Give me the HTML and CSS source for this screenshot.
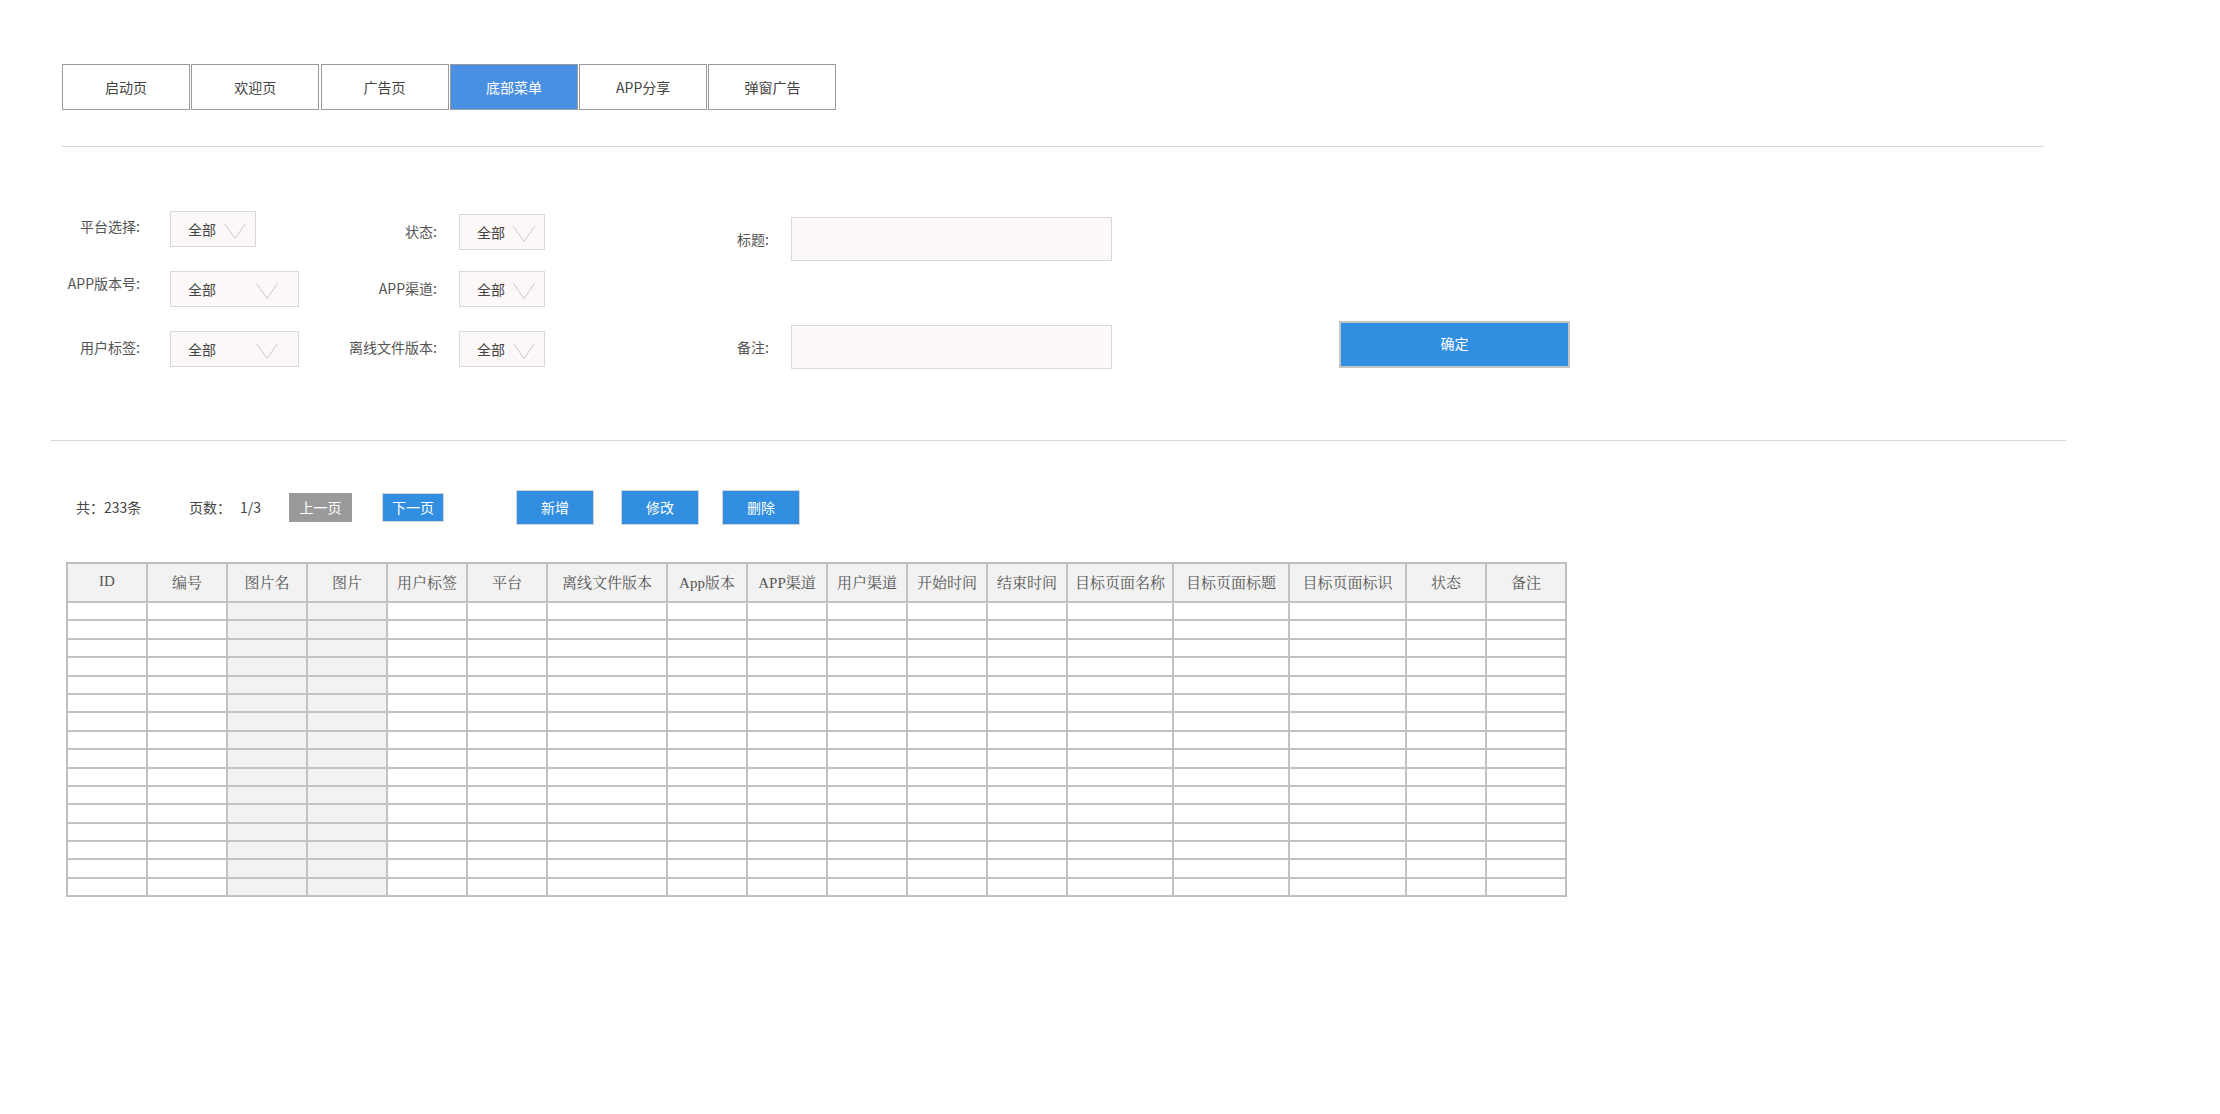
FILE: index.html
```html
<!DOCTYPE html>
<html lang="zh-CN">
<head>
<meta charset="utf-8">
<title>底部菜单</title>
<link rel="stylesheet" href="styles.css">
</head>
<body>
<div class="page">
  <div class="tabs">
    <div class="tab">启动页</div>
    <div class="tab">欢迎页</div>
    <div class="tab">广告页</div>
    <div class="tab active">底部菜单</div>
    <div class="tab">APP分享</div>
    <div class="tab">弹窗广告</div>
  </div>
  <div class="rule rule-top"></div>

  <div class="filters">
    <div class="lbl c1 r1 lbl-r1">平台选择:</div>
    <div class="select narrow c2 r1"><span>全部</span><svg class="chev" viewBox="0 0 22 16"><polyline points="0.5,0.5 11,15.5 21.5,0.5"/></svg></div>
    <div class="lbl c3 r1 lbl-state">状态:</div>
    <div class="select narrow c4 r1 sel-state"><span>全部</span><svg class="chev" viewBox="0 0 22 16"><polyline points="0.5,0.5 11,15.5 21.5,0.5"/></svg></div>
    <div class="lbl c5 r1 title-row">标题:</div>
    <div class="input c6 r1 title-row"></div>

    <div class="lbl c1 r2 lbl-up">APP版本号:</div>
    <div class="select wide c2 r2"><span>全部</span><svg class="chev" viewBox="0 0 22 16"><polyline points="0.5,0.5 11,15.5 21.5,0.5"/></svg></div>
    <div class="lbl c3 r2 lbl-mid">APP渠道:</div>
    <div class="select narrow c4 r2"><span>全部</span><svg class="chev" viewBox="0 0 22 16"><polyline points="0.5,0.5 11,15.5 21.5,0.5"/></svg></div>

    <div class="lbl c1 r3 lbl-r3">用户标签:</div>
    <div class="select wide c2 r3"><span>全部</span><svg class="chev" viewBox="0 0 22 16"><polyline points="0.5,0.5 11,15.5 21.5,0.5"/></svg></div>
    <div class="lbl c3 r3 lbl-r3">离线文件版本:</div>
    <div class="select narrow c4 r3"><span>全部</span><svg class="chev" viewBox="0 0 22 16"><polyline points="0.5,0.5 11,15.5 21.5,0.5"/></svg></div>
    <div class="lbl c5 r3 note-row">备注:</div>
    <div class="input c6 r3 note-row"></div>
    <div class="confirm c8 r3">确定</div>
  </div>

  <div class="rule rule-mid"></div>

  <div class="toolbar">
    <span class="t-total">共：233条</span>
    <span class="t-pages">页数：</span>
    <span class="t-num">1/3</span>
    <div class="btn btn-gray btn-prev">上一页</div>
    <div class="btn btn-blue btn-next">下一页</div>
    <div class="btn btn-blue btn-act btn-add">新增</div>
    <div class="btn btn-blue btn-act btn-edit">修改</div>
    <div class="btn btn-blue btn-act btn-del">删除</div>
  </div>

  <table class="grid">
    <colgroup>
      <col class="w80"><col class="w80"><col class="w80"><col class="w80"><col class="w80"><col class="w80">
      <col class="w120"><col class="w80"><col class="w80"><col class="w80"><col class="w80"><col class="w80">
      <col class="w107"><col class="w116"><col class="w118"><col class="w80"><col class="w80">
    </colgroup>
    <thead>
      <tr>
        <th>ID</th><th>编号</th><th>图片名</th><th>图片</th><th>用户标签</th><th>平台</th><th>离线文件版本</th><th>App版本</th><th>APP渠道</th><th>用户渠道</th><th>开始时间</th><th>结束时间</th><th>目标页面名称</th><th>目标页面标题</th><th>目标页面标识</th><th>状态</th><th>备注</th>
      </tr>
    </thead>
    <tbody id="rows"></tbody>
  </table>
</div>
<script src="script.js"></script>
</body>
</html>
```

FILE: script.js
```js
(function () {
  var body = document.getElementById('rows');
  var html = '';
  for (var r = 0; r < 16; r++) {
    html += '<tr>';
    for (var c = 0; c < 17; c++) {
      html += (c === 2 || c === 3) ? '<td class="shade"></td>' : '<td></td>';
    }
    html += '</tr>';
  }
  body.innerHTML = html;
})();
```

FILE: styles.css
```css
html, body {
  margin: 0;
  padding: 0;
  background: #ffffff;
}

body {
  font-family: "Noto Sans CJK SC", "Liberation Sans", sans-serif;
  font-size: 14px;
  color: #555555;
}

.page {
  width: 2220px;
  min-height: 1114px;
  padding-top: 64px;
  box-sizing: border-box;
}

/* ---------- tabs ---------- */
.tabs {
  display: flex;
  gap: 1.3px;
  margin-left: 62px;
}

.tab {
  width: 128px;
  height: 46px;
  box-sizing: border-box;
  border: 1px solid #9a9a9a;
  display: flex;
  align-items: center;
  justify-content: center;
  color: #444444;
  font-size: 14px;
}

.tab.active {
  background: #4a90e2;
  color: #ffffff;
}

/* ---------- rules ---------- */
.rule {
  height: 1px;
  background: #d7d7d7;
}

.rule-top {
  margin-top: 36px;
  margin-left: 62px;
  width: 1982px;
}

.rule-mid {
  margin-top: 61px;
  margin-left: 51px;
  width: 2015px;
}

/* ---------- filters ---------- */
.filters {
  margin-top: 52px;
  margin-left: 62px;
  display: grid;
  grid-template-columns: 78px 159px 138px 108px 224px 343px 227px 231px;
  grid-template-rows: 60px 60px 60px;
}

.c1 { grid-column: 1; }
.c2 { grid-column: 2; margin-left: 30px; }
.c3 { grid-column: 3; }
.c4 { grid-column: 4; margin-left: 22px; }
.c5 { grid-column: 5; }
.c6 { grid-column: 6; margin-left: 22px; }
.c8 { grid-column: 8; }
.r1 { grid-row: 1; }
.r2 { grid-row: 2; }
.r3 { grid-row: 3; }

.lbl {
  align-self: center;
  justify-self: end;
  white-space: nowrap;
  color: #555555;
  font-size: 14px;
  line-height: 20px;
}

.lbl-r1 { margin-bottom: 6px; }
.lbl-state { margin-top: 4px; }
.lbl-up { margin-bottom: 13px; }
.lbl-mid { margin-bottom: 2px; }
.lbl-r3 { margin-bottom: 5px; }

.select {
  align-self: center;
  justify-self: start;
  height: 36px;
  box-sizing: border-box;
  background: #fdf8f8;
  border: 1px solid #d9d9d9;
  display: flex;
  align-items: center;
  padding-left: 17px;
  color: #444444;
  font-size: 14px;
}

.select.narrow { width: 86px; padding-right: 9px; }
.select.wide { width: 129px; padding-right: 20px; }
.sel-state { margin-top: 5px; }

.chev {
  width: 22px;
  height: 16px;
  margin-left: auto;
  margin-top: 4px;
  fill: none;
  stroke: #c9c9c9;
  stroke-width: 1;
}

.input {
  align-self: center;
  height: 44px;
  box-sizing: border-box;
  background: #fdf9f9;
  border: 1px solid #dadada;
}

.title-row { margin-top: 20px; }
.note-row { margin-bottom: 4px; }

.confirm {
  align-self: center;
  margin-bottom: 9px;
  height: 47px;
  width: 231px;
  box-sizing: border-box;
  background: #318ee0;
  border: 2px solid #c4c4c4;
  color: #ffffff;
  display: flex;
  align-items: center;
  justify-content: center;
  font-size: 14px;
  padding-bottom: 3px;
}

/* ---------- toolbar ---------- */
.toolbar {
  margin-top: 48px;
  margin-left: 76px;
  height: 36px;
  display: flex;
  align-items: center;
  color: #444444;
  font-size: 14px;
}

.t-total { width: 113px; }
.t-pages { width: 51px; }
.t-num { width: 49px; }

.btn {
  box-sizing: border-box;
  display: flex;
  align-items: center;
  justify-content: center;
  color: #ffffff;
  font-size: 14px;
}

.btn-gray {
  background: #9a9a9a;
}

.btn-blue {
  background: #318ee0;
  border: 1px solid #d6d6d6;
}

.btn-prev { width: 63px; height: 29px; }
.btn-next { width: 62px; height: 29px; margin-left: 30px; }
.btn-act { width: 78px; height: 35px; }
.btn-add { margin-left: 72px; }
.btn-edit { margin-left: 27px; }
.btn-del { margin-left: 23px; }

/* ---------- table ---------- */
.grid {
  margin-top: 37px;
  margin-left: 66px;
  width: 1500px;
  table-layout: fixed;
  border-collapse: separate;
  border-spacing: 0;
  border: 1px solid #bdbdbd;
}

.w80 { width: 80px; }
.w107 { width: 106px; }
.w116 { width: 116px; }
.w118 { width: 117px; }
.w120 { width: 120px; }

.grid th,
.grid td {
  border: 1px solid #c2c2c2;
  padding: 0;
}

.grid th {
  height: 35px;
  background: #f2f2f2;
  font-family: "Liberation Serif", "Noto Serif CJK SC", "Noto Sans CJK SC", serif;
  font-weight: normal;
  font-size: 15px;
  color: #555555;
  text-align: center;
  white-space: nowrap;
  padding-bottom: 2px;
}

.grid td {
  height: 16.4px;
  background: #ffffff;
}

.grid td.shade {
  background: #f2f2f2;
}
```
